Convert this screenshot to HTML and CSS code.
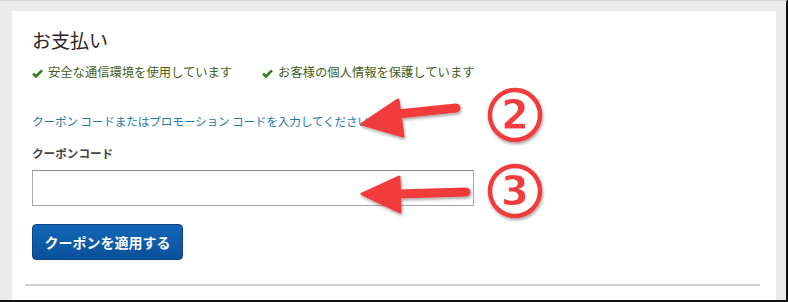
FILE: index.html
```html
<!DOCTYPE html>
<html lang="ja">
<head>
    <meta charset="UTF-8">
    <meta name="viewport" content="width=device-width, initial-scale=1.0">
    <title>お支払い</title>
    <link rel="stylesheet" href="styles.css">
</head>
<body>
    <div class="frame">
        <div class="panel">
            <h1 class="title">お支払い</h1>
            <ul class="secure">
                <li><svg class="check" width="11" height="9" viewBox="0 0 11 9"><path d="M1 4.6 L4 7.4 L10 1.4" fill="none" stroke="#2e7a1c" stroke-width="2.6"/></svg>安全な通信環境を使用しています</li>
                <li><svg class="check" width="11" height="9" viewBox="0 0 11 9"><path d="M1 4.6 L4 7.4 L10 1.4" fill="none" stroke="#2e7a1c" stroke-width="2.6"/></svg>お客様の個人情報を保護しています</li>
            </ul>
            <a class="promo-link" href="#">クーポン コードまたはプロモーション コードを入力してください</a>
            <label class="label" for="coupon">クーポンコード</label>
            <input class="coupon-input" id="coupon" type="text">
            <button class="apply-btn" type="button">クーポンを適用する</button>
            <hr class="rule">
        </div>
    </div>

    <!-- 注釈（矢印と番号） -->
    <svg class="notes" width="788" height="302" viewBox="0 0 788 302">
        <defs>
            <filter id="shadow" x="-20%" y="-20%" width="140%" height="140%">
                <feDropShadow dx="1" dy="2" stdDeviation="1.5" flood-color="#000" flood-opacity="0.35"/>
            </filter>
        </defs>
        <g filter="url(#shadow)" fill="#f23b3b" stroke="#f23b3b" stroke-linejoin="round" stroke-linecap="round">
            <path d="M456 108 L398 114" stroke-width="9" fill="none"/>
            <path d="M362 124 L398 100 L403 136 Z" stroke-width="3"/>
            <path d="M466 192 L398 194" stroke-width="9" fill="none"/>
            <path d="M362 194 L399 177 L400 212 Z" stroke-width="3"/>
        </g>
        <g filter="url(#shadow)" class="num">
            <circle cx="515" cy="115" r="25" fill="#fff" stroke="#f23b3b" stroke-width="4.5"/>
            <text x="515" y="129" text-anchor="middle">2</text>
            <circle cx="515" cy="191" r="25" fill="#fff" stroke="#f23b3b" stroke-width="4.5"/>
            <text x="515" y="205" text-anchor="middle">3</text>
        </g>
    </svg>
</body>
</html>
```

FILE: styles.css
```css
body {
    margin: 0;
    font-family: "Noto Sans CJK JP", "Noto Sans", sans-serif;
}
.frame {
    box-sizing: border-box;
    width: 788px;
    height: 302px;
    padding: 10px 10px 0 12px;
    background-color: #ebebeb;
    border-top: 1px solid #d4d4d4;
    border-right: 2px solid #111111;
    border-bottom: 2px solid #111111;
}
.panel {
    height: 100%;
    background-color: #ffffff;
    padding: 17px 16px 0 20px;
    box-sizing: border-box;
}
.title {
    margin: 0;
    font-size: 19px;
    font-weight: normal;
    line-height: 24px;
    color: #2b2323;
}
.secure {
    list-style: none;
    display: flex;
    gap: 30px;
    margin: 11px 0 0;
    padding: 0;
    font-size: 12.3px;
    line-height: 18px;
    color: #3f5f1a;
}
.check {
    margin-right: 5px;
    vertical-align: -1px;
}
.promo-link {
    display: block;
    margin-top: 31px;
    font-size: 11.7px;
    line-height: 18px;
    color: #2079a8;
    text-decoration: none;
    letter-spacing: -0.2px;
}
.label {
    display: block;
    margin-top: 14px;
    font-size: 11.6px;
    line-height: 18px;
    font-weight: bold;
    color: #444444;
}
.coupon-input {
    display: block;
    box-sizing: border-box;
    width: 442px;
    height: 36px;
    margin-top: 8px;
    border: 1px solid #a9a9a9;
    border-top-color: #8a8a8a;
    background-color: #ffffff;
}
.apply-btn {
    display: block;
    box-sizing: border-box;
    width: 151px;
    height: 36px;
    margin-top: 18px;
    padding: 0;
    border: 1px solid #0b4586;
    border-radius: 4px;
    background: linear-gradient(#1466b8, #0a5099);
    color: #ffffff;
    font-family: inherit;
    font-size: 14px;
    font-weight: bold;
}
.rule {
    margin: 24px 0 0 -7px;
    border: 0;
    border-top: 2px solid #cfcfcf;
    width: 735px;
}
.notes {
    position: absolute;
    top: 0;
    left: 0;
}
.num text {
    font-family: "DejaVu Sans", sans-serif;
    font-size: 40px;
    font-weight: bold;
    fill: #f23b3b;
    stroke: #ffffff;
    stroke-width: 0.8px;
}
```
